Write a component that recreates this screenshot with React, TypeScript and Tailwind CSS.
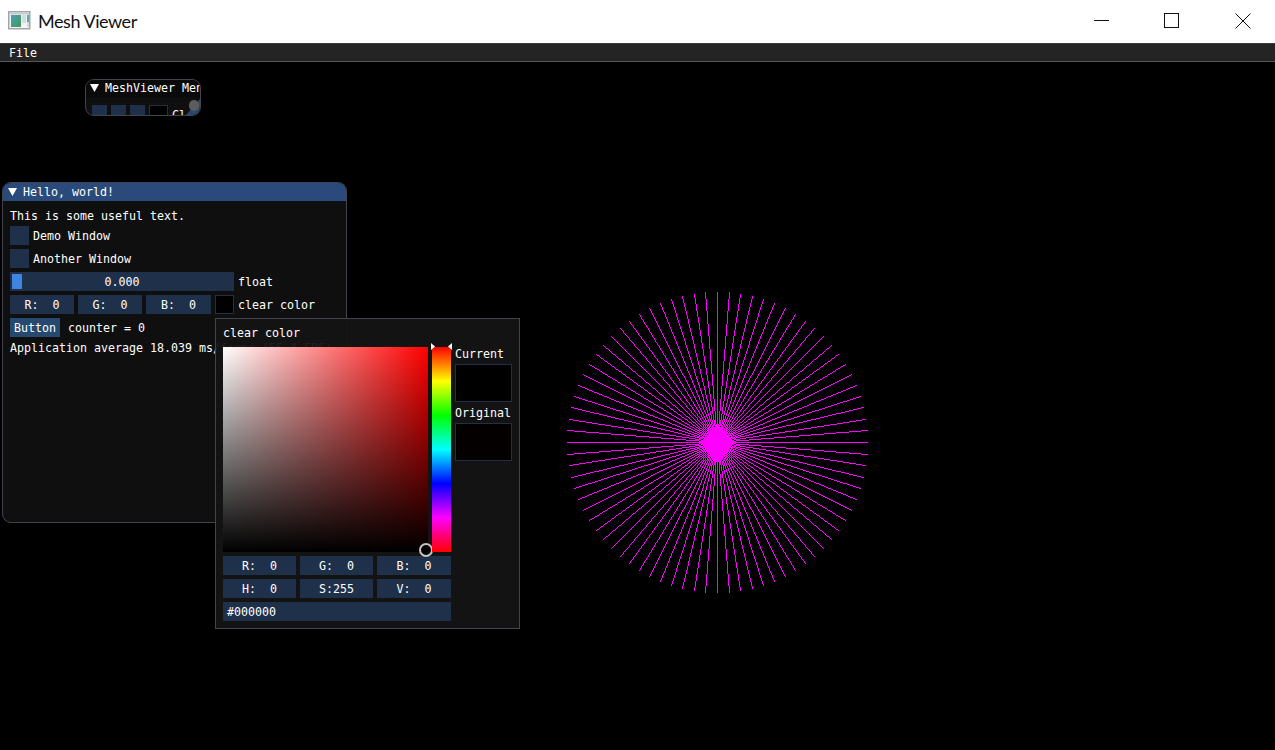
import React from "react";

const mono = "font-['DejaVu_Sans_Mono',monospace] text-[11.63px] leading-[13px] text-white whitespace-pre";
const low = "pt-[2px]";

function Tri() {
  return (
    <svg width="9" height="9" viewBox="0 0 9 9" className="shrink-0">
      <polygon points="0,0 9,0 4.5,8" fill="#fff" />
    </svg>
  );
}

function spokePath() {
  let d = "";
  const c = 150;
  for (let i = 0; i < 80; i++) {
    const a = (i * Math.PI * 2) / 80;
    const ex = Math.round(c + 150 * Math.cos(a));
    const ey = Math.round(c + 150 * Math.sin(a));
    const steps = Math.max(Math.abs(ex - c), Math.abs(ey - c));
    for (let s = 0; s <= steps; s++) {
      const x = Math.round(c + ((ex - c) * s) / steps);
      const y = Math.round(c + ((ey - c) * s) / steps);
      d += `M${x} ${y}h1v1h-1z`;
    }
  }
  return d;
}

function Star() {
  return (
    <svg width="301" height="301" viewBox="0 0 301 301" shapeRendering="crispEdges" className="absolute left-[567px] top-[292px]">
      <path d={spokePath()} fill="#ff00ff" />
      <polygon points="150.5,131 167,150.5 150.5,171 134,150.5" fill="#ff00ff" />
    </svg>
  );
}

function Field({ children, className = "" }: { children: React.ReactNode; className?: string }) {
  return (
    <div className={`h-[19px] bg-[#1f304a] flex items-center justify-center ${low} ${mono} ${className}`}>{children}</div>
  );
}

function Box() {
  return <div className="w-[19px] h-[19px] bg-[#1f304a] shrink-0" />;
}

export default function App() {
  return (
    <div className="relative w-[1275px] h-[750px] bg-black overflow-hidden">
      <div className="h-[43px] bg-white flex items-center">
        <svg width="23" height="19" viewBox="0 0 23 19" className="ml-[8px] -mt-[3px] shrink-0">
          <defs>
            <linearGradient id="ic" x1="0" y1="0" x2="1" y2="1">
              <stop offset="0" stopColor="#4f9fb0" />
              <stop offset="1" stopColor="#3f9a5c" />
            </linearGradient>
          </defs>
          <rect x="0.75" y="0.75" width="21" height="17" fill="#f2f4f5" stroke="#a3a6a9" strokeWidth="1.5" />
          <rect x="2" y="2" width="19" height="1.5" fill="#c4ccd2" />
          <rect x="3" y="4" width="10" height="12" fill="url(#ic)" />
          <rect x="14" y="4" width="4" height="8" fill="#d6dadb" />
          <rect x="19" y="4" width="2" height="7" fill="#5da8a8" />
          <rect x="19" y="11" width="2" height="5" fill="#d6dadb" />
        </svg>
        <span className="ml-[7px] -mt-[1px] font-['Lato',sans-serif] text-[18px] tracking-[-0.45px] text-[#111] leading-[24px]">Mesh Viewer</span>
        <div className="ml-auto -mt-[2px] flex items-center">
          <svg width="16" height="16" viewBox="0 0 16 16" className="mr-[54px]" shapeRendering="crispEdges">
            <line x1="0" y1="7.5" x2="15" y2="7.5" stroke="#111" />
          </svg>
          <svg width="16" height="16" viewBox="0 0 16 16" className="mr-[55px]" shapeRendering="crispEdges">
            <rect x="0.5" y="0.5" width="14" height="14" fill="none" stroke="#111" />
          </svg>
          <svg width="16" height="16" viewBox="0 0 16 16" className="mr-[24px]">
            <path d="M0.5 0.5 L15.5 15.5 M15.5 0.5 L0.5 15.5" stroke="#111" fill="none" />
          </svg>
        </div>
      </div>

      <div className="h-[19px] bg-[#242424] border-t border-t-[#3a3a3a] border-b border-b-[#55555c] flex items-center pl-[9px]">
        <span className={`${mono} ${low}`}>File</span>
      </div>

      <Star />

      {/* MeshViewer Menu window */}
      <div className="absolute left-[85px] top-[79px] w-[116px] h-[37px] rounded-[9px] border border-[#43434f] bg-[#0f0f0f] overflow-hidden">
        <div className="h-[18px] pb-[2px] bg-[#0a0a0a] flex items-center pl-[4px] gap-[6px] overflow-hidden">
          <Tri />
          <span className={mono}>MeshViewer Menu</span>
        </div>
        <div className="flex items-start pl-[6px] pt-[7px] gap-[4px] h-[18px] overflow-hidden">
          <div className="w-[15px] h-[19px] bg-[#1f304a] shrink-0" />
          <div className="w-[15px] h-[19px] bg-[#1f304a] shrink-0" />
          <div className="w-[15px] h-[19px] bg-[#1f304a] shrink-0" />
          <div className="w-[19px] h-[19px] bg-black border border-[#1f304a] shrink-0" />
          <span className={`${mono} mt-[4px]`}>Cl</span>
        </div>
        <svg width="14" height="16" viewBox="0 0 14 16" className="absolute right-0 bottom-0">
          <polygon points="14,0 14,16 0,16" fill="#27496f" />
        </svg>
        <div className="absolute right-[1px] top-[20px] w-[10px] h-[11px] rounded-[5px] bg-[#5c5c5c]" />
      </div>

      {/* Hello window */}
      <div className="absolute left-[2px] top-[182px] w-[345px] h-[341px] rounded-[9px] border border-[#43434f] bg-[#0f0f0f] overflow-hidden">
        <div className="h-[18px] bg-[#294a7a] flex items-center pl-[5px] gap-[6px]">
          <Tri />
          <span className={mono}>Hello, world!</span>
        </div>
        <div className="flex flex-col pl-[7px] pt-[9px]">
          <div className={`${mono} h-[13px] mb-[3px]`}>This is some useful text.</div>
          <div className="flex flex-col gap-[4px]">
            <div className="flex items-center gap-[4px]">
              <Box />
              <span className={`${mono} ${low}`}>Demo Window</span>
            </div>
            <div className="flex items-center gap-[4px]">
              <Box />
              <span className={`${mono} ${low}`}>Another Window</span>
            </div>
            <div className="flex items-center gap-[4px]">
              <div className="relative w-[224px] h-[19px] bg-[#1f304a]">
                <div className="absolute left-[2px] top-[2px] w-[10px] h-[15px] bg-[#3d85e0]" />
                <div className={`absolute inset-0 flex items-center justify-center ${low} ${mono}`}>0.000</div>
              </div>
              <span className={`${mono} ${low}`}>float</span>
            </div>
            <div className="flex items-center gap-[4px]">
              <Field className="w-[64px]">{"R:  0"}</Field>
              <Field className="w-[64px]">{"G:  0"}</Field>
              <Field className="w-[65px]">{"B:  0"}</Field>
              <div className="w-[19px] h-[19px] bg-black border border-[#1f304a] shrink-0" />
              <span className={`${mono} ${low}`}>clear color</span>
            </div>
            <div className="flex items-center gap-[8px]">
              <div className={`w-[50px] h-[19px] bg-[#27496f] flex items-center justify-center ${low} ${mono}`}>Button</div>
              <span className={`${mono} ${low}`}>counter = 0</span>
            </div>
            <div className={`${mono} h-[13px] mt-[1px]`}>Application average 18.039 ms/frame (55.4 FPS)</div>
          </div>
        </div>
      </div>

      {/* Colour picker popup */}
      <div className="absolute left-[215px] top-[318px] w-[305px] h-[311px] border border-[#43434f] bg-[#141414]/95 pl-[7px] pt-[8px]">
        <div className={`${mono} h-[13px]`}>clear color</div>
        <div className="flex mt-[7px] gap-[4px]">
          <div className="relative w-[205px] h-[205px] bg-[linear-gradient(to_bottom,transparent,#000),linear-gradient(to_right,#fff,#f00)]">
            <div className="absolute left-[196px] top-[196px] w-[14px] h-[14px] rounded-full bg-black border-2 border-[#c4c4c4]" />
          </div>
          <div className="relative w-[19px] h-[205px] bg-[linear-gradient(to_bottom,#f00,#ff0,#0f0,#0ff,#00f,#f0f,#f00)]">
            <svg width="25" height="7" viewBox="0 0 25 7" className="absolute left-[-1px] top-[-4px]">
              <polygon points="0,0 4,3.5 0,7" fill="#fff" />
              <polygon points="21,0 21,7 17,3.5" fill="#fff" />
            </svg>
          </div>
          <div className="flex flex-col">
            <div className={`${mono} mt-[1px]`}>Current</div>
            <div className="w-[57px] h-[38px] mt-[3px] bg-black border border-[#1f304a]" />
            <div className={`${mono} mt-[5px]`}>Original</div>
            <div className="w-[57px] h-[38px] mt-[3px] bg-[#050000] border border-[#1f304a]" />
          </div>
        </div>
        <div className="flex flex-col gap-[4px] mt-[4px] w-[228px]">
          <div className="flex gap-[4px]">
            <Field className="w-[73px]">{"R:  0"}</Field>
            <Field className="w-[73px]">{"G:  0"}</Field>
            <Field className="w-[74px]">{"B:  0"}</Field>
          </div>
          <div className="flex gap-[4px]">
            <Field className="w-[73px]">{"H:  0"}</Field>
            <Field className="w-[73px]">S:255</Field>
            <Field className="w-[74px]">{"V:  0"}</Field>
          </div>
          <Field className="!justify-start pl-[4px]">#000000</Field>
        </div>
      </div>
    </div>
  );
}
